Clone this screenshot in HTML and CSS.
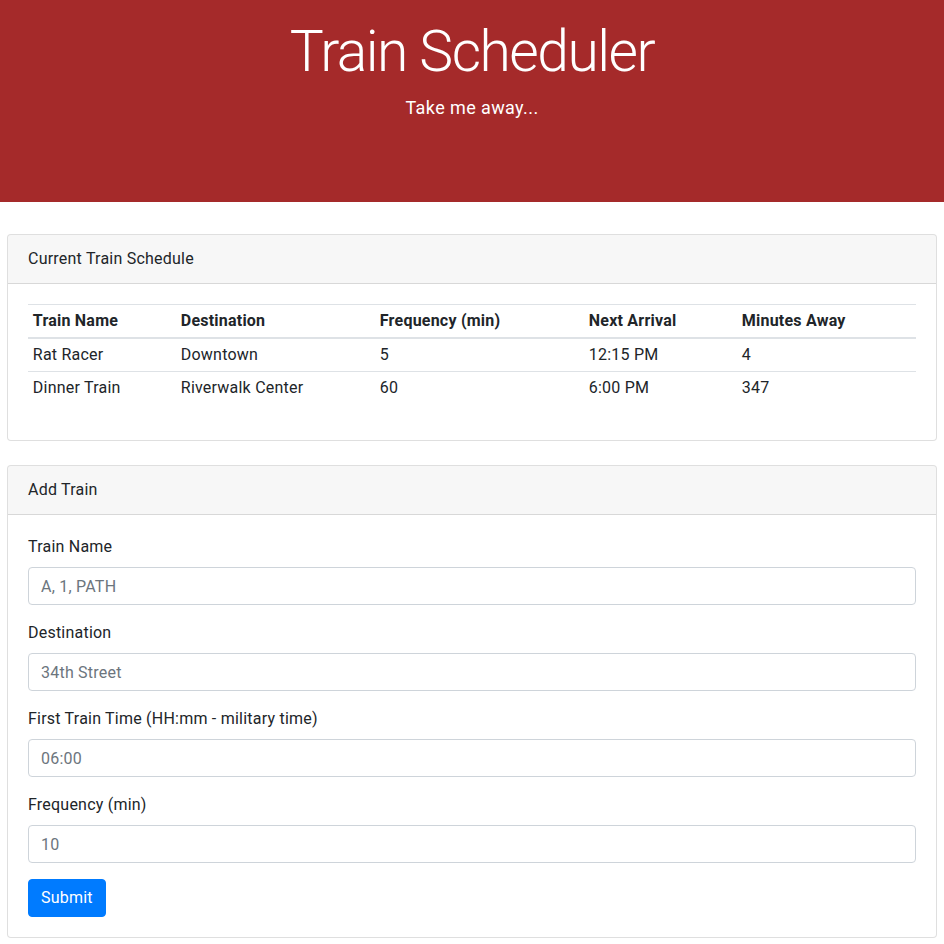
FILE: index.html
```html
<!DOCTYPE html>
<html lang="en">
<head>
<meta charset="utf-8">
<title>Train Scheduler</title>
<link rel="stylesheet" href="styles.css">
</head>
<body>
<header class="jumbotron">
  <h1 class="display">Train Scheduler</h1>
  <p class="lead">Take me away...</p>
</header>
<main class="page">
  <section class="card">
    <div class="card-header">Current Train Schedule</div>
    <div class="card-body">
      <table class="table">
        <thead>
          <tr>
            <th class="c1">Train Name</th>
            <th class="c2">Destination</th>
            <th class="c3">Frequency (min)</th>
            <th class="c4">Next Arrival</th>
            <th class="c5">Minutes Away</th>
          </tr>
        </thead>
        <tbody>
          <tr><td>Rat Racer</td><td>Downtown</td><td>5</td><td>12:15 PM</td><td>4</td></tr>
          <tr><td>Dinner Train</td><td>Riverwalk Center</td><td>60</td><td>6:00 PM</td><td>347</td></tr>
        </tbody>
      </table>
    </div>
  </section>
  <section class="card card-add">
    <div class="card-header">Add Train</div>
    <div class="card-body">
      <form class="form">
        <div class="form-group">
          <label for="name">Train Name</label>
          <input id="name" class="form-control" type="text" placeholder="A, 1, PATH">
        </div>
        <div class="form-group">
          <label for="dest">Destination</label>
          <input id="dest" class="form-control" type="text" placeholder="34th Street">
        </div>
        <div class="form-group">
          <label for="first">First Train Time (HH:mm - military time)</label>
          <input id="first" class="form-control" type="text" placeholder="06:00">
        </div>
        <div class="form-group">
          <label for="freq">Frequency (min)</label>
          <input id="freq" class="form-control" type="text" placeholder="10">
        </div>
        <button type="button" class="btn">Submit</button>
      </form>
    </div>
  </section>
</main>
</body>
</html>
```
FILE: styles.css
```css
* { box-sizing: border-box; }
html, body { margin: 0; padding: 0; }
body {
  font-family: Roboto, "Liberation Sans", sans-serif;
  font-size: 16px;
  line-height: 1.5;
  letter-spacing: 0.22px;
  color: #212529;
  background: #fff;
}
.jumbotron {
  background: #a52a2a;
  color: #fff;
  text-align: center;
  height: 202px;
  padding-top: 18px;
}
.display {
  margin: 0 0 8px;
  font-size: 57px;
  font-weight: 300;
  line-height: 1.2;
  letter-spacing: -1.5px;
}
.lead {
  margin: 0;
  font-size: 18px;
  font-weight: 400;
  letter-spacing: 0.4px;
}
.page {
  padding: 32px 7px 0;
}
.card {
  border: 1px solid rgba(0,0,0,.125);
  border-radius: 4px;
  background: #fff;
}
.card-add { margin-top: 24px; }
.card-header {
  padding: 12px 20px;
  background: rgba(0,0,0,.03);
  border-bottom: 1px solid rgba(0,0,0,.125);
  border-radius: 3px 3px 0 0;
}
.card-body { padding: 20px; }
.table {
  width: 100%;
  border-collapse: collapse;
  margin-bottom: 16px;
}
.table th, .table td {
  padding: 4px 4.8px;
  text-align: left;
  vertical-align: top;
  border-top: 1px solid #dee2e6;
}
.table th { font-weight: 700; }
.table thead th { border-bottom: 2px solid #dee2e6; }
.c1 { width: 148px; }
.c2 { width: 199px; }
.c3 { width: 209px; }
.c4 { width: 153px; }
.form-group { margin-bottom: 16px; }
.form-group label {
  display: inline-block;
  margin-bottom: 8px;
}
.form-control {
  display: block;
  width: 100%;
  height: 38px;
  padding: 6px 12px;
  font: inherit;
  letter-spacing: inherit;
  color: #495057;
  background: #fff;
  border: 1px solid #ced4da;
  border-radius: 4px;
}
.form-control::placeholder { color: #6c757d; opacity: 1; }
.btn {
  display: inline-block;
  height: 38px;
  padding: 6px 12px;
  font: inherit;
  letter-spacing: inherit;
  color: #fff;
  background: #007bff;
  border: 1px solid #007bff;
  border-radius: 4px;
}
```
